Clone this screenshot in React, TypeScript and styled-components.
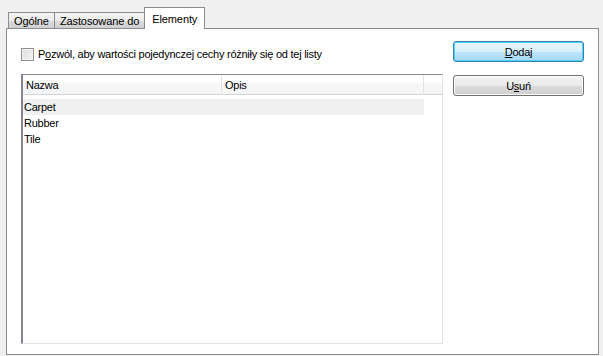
import React from "react";
import styled, { createGlobalStyle } from "styled-components";

const GlobalStyle = createGlobalStyle`
  html, body { margin: 0; padding: 0; background: #f0f0f0; }
  body { font-family: "Liberation Sans", Arial, sans-serif; font-size: 11px; color: #000; letter-spacing: -0.25px; }
`;

const Window = styled.div`
  width: 603px;
  height: 356px;
  box-sizing: border-box;
  padding: 0 4px 1px 6px;
  display: flex;
  flex-direction: column;
  background: #f0f0f0;
`;

const TabStrip = styled.div`
  display: flex;
  align-items: flex-end;
  height: 28px;
  padding-left: 2px;
  position: relative;
  z-index: 1;
`;

const Tab = styled.div<{ $active?: boolean }>`
  box-sizing: border-box;
  height: ${(p) => (p.$active ? "22px" : "17px")};
  padding: ${(p) => (p.$active ? "4px 7px 0 7px" : "1px 5px 0 5px")};
  margin-bottom: -1px;
  margin-left: ${(p) => (p.$active ? "-1px" : "0")};
  border: 1px solid #898c95;
  border-bottom: ${(p) => (p.$active ? "none" : "1px solid #898c95")};
  border-left-width: ${(p) => (p.$active ? "1px" : "0")};
  background: ${(p) =>
    p.$active ? "#ffffff" : "linear-gradient(#f3f3f3 0%, #ebebeb 50%, #dddddd 51%, #cfcfcf 100%)"};
  line-height: 14px;
  letter-spacing: -0.1px;
  white-space: nowrap;
  &:first-child { border-left-width: 1px; }
`;

const Panel = styled.div`
  flex: 1;
  box-sizing: border-box;
  border: 1px solid #898c95;
  background: #ffffff;
  display: grid;
  grid-template-columns: 422px 131px;
  column-gap: 10px;
  padding: 12px 0 10px 14px;
`;

const LeftCol = styled.div`
  display: flex;
  flex-direction: column;
`;

const CheckRow = styled.label`
  display: flex;
  align-items: center;
  height: 20px;
  margin-top: 3px;
  gap: 4px;
`;

const Check = styled.span`
  box-sizing: border-box;
  width: 13px;
  height: 13px;
  border: 1px solid #8f8f8f;
  background: linear-gradient(135deg, #dcdcdc 0%, #f5f5f5 100%);
  box-shadow: inset 0 0 0 1px #f4f4f4;
`;

const ListBox = styled.div`
  margin-top: 10px;
  flex: 1;
  box-sizing: border-box;
  border-top: 1px solid #828790;
  border-left: 2px solid #828790;
  border-right: 1px solid #e3e3e3;
  border-bottom: 1px solid #e3e3e3;
  background: #fff;
  display: flex;
  flex-direction: column;
`;

const HeaderRow = styled.div`
  display: grid;
  grid-template-columns: 199px 202px 1fr;
  height: 19px;
  border-bottom: 1px solid #d5d5d5;
  background: linear-gradient(#ffffff 0%, #ffffff 40%, #f7f8f9 41%, #f3f4f6 100%);
`;

const HeaderCell = styled.div`
  padding-left: 3px;
  line-height: 20px;
  border-right: 1px solid #e3e4e6;
  &:last-child { border-right: none; }
`;

const Rows = styled.div`
  padding-top: 4px;
  width: 401px;
`;

const Row = styled.div<{ $selected?: boolean }>`
  height: 16px;
  line-height: 17px;
  padding-left: 1px;
  background: ${(p) => (p.$selected ? "#f0f0f0" : "transparent")};
`;

const RightCol = styled.div`
  display: flex;
  flex-direction: column;
  gap: 13px;
`;

const Button = styled.button<{ $primary?: boolean }>`
  box-sizing: border-box;
  width: 131px;
  height: 21px;
  border-radius: 3px;
  font-family: inherit;
  font-size: 11px;
  letter-spacing: inherit;
  color: #000;
  padding: 0;
  border: 1px solid ${(p) => (p.$primary ? "#3c7fb1" : "#707070")};
  background: ${(p) =>
    p.$primary
      ? "linear-gradient(#eaf6fd 0%, #d9f0fc 50%, #bee6fd 51%, #a7d9f5 100%)"
      : "linear-gradient(#f2f2f2 0%, #ebebeb 50%, #dddddd 51%, #cfcfcf 100%)"};
  box-shadow: inset 0 0 0 1px ${(p) => (p.$primary ? "#48d3fb" : "#fcfcfc")};
`;

const U = styled.span`
  text-decoration: underline;
`;

export default function App() {
  return (
    <>
      <GlobalStyle />
      <Window>
        <TabStrip>
          <Tab>Ogólne</Tab>
          <Tab>Zastosowane do</Tab>
          <Tab $active>Elementy</Tab>
        </TabStrip>
        <Panel>
          <LeftCol>
            <CheckRow>
              <Check />
              <span>
                P<U>o</U>zwól, aby wartości pojedynczej cechy różniły się od tej listy
              </span>
            </CheckRow>
            <ListBox>
              <HeaderRow>
                <HeaderCell>Nazwa</HeaderCell>
                <HeaderCell>Opis</HeaderCell>
                <HeaderCell />
              </HeaderRow>
              <Rows>
                <Row $selected>Carpet</Row>
                <Row>Rubber</Row>
                <Row>Tile</Row>
              </Rows>
            </ListBox>
          </LeftCol>
          <RightCol>
            <Button $primary>
              <U>D</U>odaj
            </Button>
            <Button>
              U<U>s</U>uń
            </Button>
          </RightCol>
        </Panel>
      </Window>
    </>
  );
}
